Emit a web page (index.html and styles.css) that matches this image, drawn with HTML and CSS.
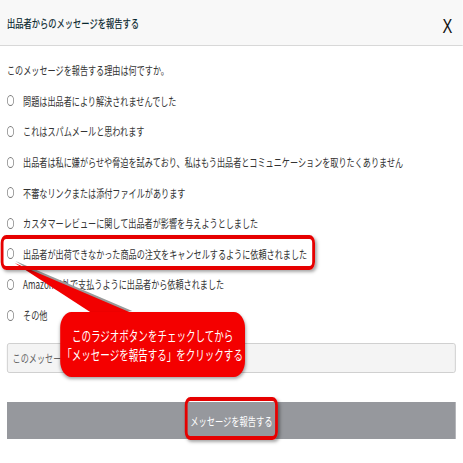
FILE: index.html
```html
<!DOCTYPE html>
<html lang="ja">
<head>
<meta charset="utf-8">
<title>出品者からのメッセージを報告する</title>
<link rel="stylesheet" href="styles.css">
</head>
<body>
<div class="frame">
<div class="page">
  <header class="head">
    <h1 class="title">出品者からのメッセージを報告する</h1>
    <span class="close">X</span>
  </header>
  <main class="body">
    <p class="q">このメッセージを報告する理由は何ですか。</p>
    <ul class="opts">
      <li class="opt"><span class="radio"></span><span>問題は出品者により解決されませんでした</span></li>
      <li class="opt"><span class="radio"></span><span>これはスパムメールと思われます</span></li>
      <li class="opt"><span class="radio"></span><span>出品者は私に嫌がらせや脅迫を試みており、私はもう出品者とコミュニケーションを取りたくありません</span></li>
      <li class="opt"><span class="radio"></span><span>不審なリンクまたは添付ファイルがあります</span></li>
      <li class="opt"><span class="radio"></span><span>カスタマーレビューに関して出品者が影響を与えようとしました</span></li>
      <li class="opt"><span class="radio"></span><span>出品者が出荷できなかった商品の注文をキャンセルするように依頼されました</span></li>
      <li class="opt"><span class="radio"></span><span>Amazon以外で支払うように出品者から依頼されました</span></li>
      <li class="opt"><span class="radio"></span><span>その他</span></li>
    </ul>
    <div class="field">このメッセージを報告する理由を説明してください</div>
    <div class="btn">メッセージを報告する</div>
  </main>

  <svg class="tail" viewBox="0 0 661 463" width="661" height="463" aria-hidden="true">
    <polygon points="21,263 188,313 142,318" fill="#9a9a9a" transform="translate(1,-2)"/>
    <polygon points="21,263 188,313 142,318" fill="#f20000"/>
  </svg>
  <div class="hl hl-row"></div>
  <div class="hl hl-btn"></div>
  <div class="bubble">
    <span>このラジオボタンをチェックしてから</span>
    <span>「メッセージを報告する」をクリックする</span>
  </div>
</div>
</div>
</body>
</html>
```
FILE: styles.css
```css
html, body {
  margin: 0;
  padding: 0;
  background: #fff;
  overflow: hidden;
}

.frame {
  width: 463px;
  height: 463px;
  overflow: hidden;
}

.page {
  position: relative;
  width: 661px;
  height: 463px;
  transform: scaleX(0.7);
  transform-origin: 0 0;
  font-family: "Noto Sans CJK JP", "Noto Sans", sans-serif;
  color: #333;
}

.head {
  height: 45px;
  background: #f8f8f8;
  border-bottom: 1px solid #d8d8d8;
  display: flex;
  align-items: center;
  justify-content: space-between;
  padding: 0 15px 0 10px;
}

.title {
  margin: 0;
  font-size: 11.8px;
  font-weight: normal;
  color: #07262d;
  line-height: 1;
  -webkit-text-stroke: 0.2px #07262d;
}

.close {
  font-family: "Liberation Sans", Arial, sans-serif;
  font-size: 21px;
  color: #111;
  line-height: 1;
  margin-top: 5px;
}

.body {
  padding: 9px 10px 0;
}

.q {
  margin: 0;
  height: 30.6px;
  display: flex;
  align-items: center;
  font-size: 11.6px;
}

.opts {
  list-style: none;
  margin: 0;
  padding: 0;
}

.opt {
  height: 30.6px;
  display: flex;
  align-items: center;
  gap: 13px;
  font-size: 11.6px;
  white-space: nowrap;
}

.radio {
  flex: none;
  width: 10px;
  height: 11px;
  box-sizing: border-box;
  border: 1px solid #7a7a7a;
  border-radius: 50%;
  background: #fff;
}

.field {
  margin-top: 12.6px;
  height: 30px;
  box-sizing: border-box;
  border: 1px solid #c9c9c9;
  border-radius: 3px;
  background: #f4f4f4;
  display: flex;
  align-items: center;
  padding-left: 7px;
  font-size: 11.6px;
  color: #666;
}

.btn {
  margin-top: 29px;
  height: 37px;
  background: #96989d;
  color: #fff;
  display: flex;
  align-items: center;
  justify-content: center;
  font-size: 11.8px;
}

.tail {
  position: absolute;
  left: 0;
  top: 0;
}

.hl {
  position: absolute;
  box-sizing: border-box;
  border: 4px solid #e60000;
  border-radius: 8px;
  box-shadow: 2px 2px 4px rgba(0, 0, 0, 0.35);
}

.hl-row {
  left: 1px;
  top: 235px;
  width: 449px;
  height: 35px;
}

.hl-btn {
  left: 264px;
  top: 397px;
  width: 133px;
  height: 43px;
}

.bubble {
  position: absolute;
  left: 86px;
  top: 312px;
  width: 264px;
  height: 65px;
  box-sizing: border-box;
  background: #f40000;
  border-radius: 16px;
  box-shadow: 1px 2px 4px rgba(0, 0, 0, 0.35);
  color: #fff;
  font-size: 13.6px;
  line-height: 19px;
  display: flex;
  flex-direction: column;
  align-items: center;
  justify-content: center;
  white-space: nowrap;
}
```
